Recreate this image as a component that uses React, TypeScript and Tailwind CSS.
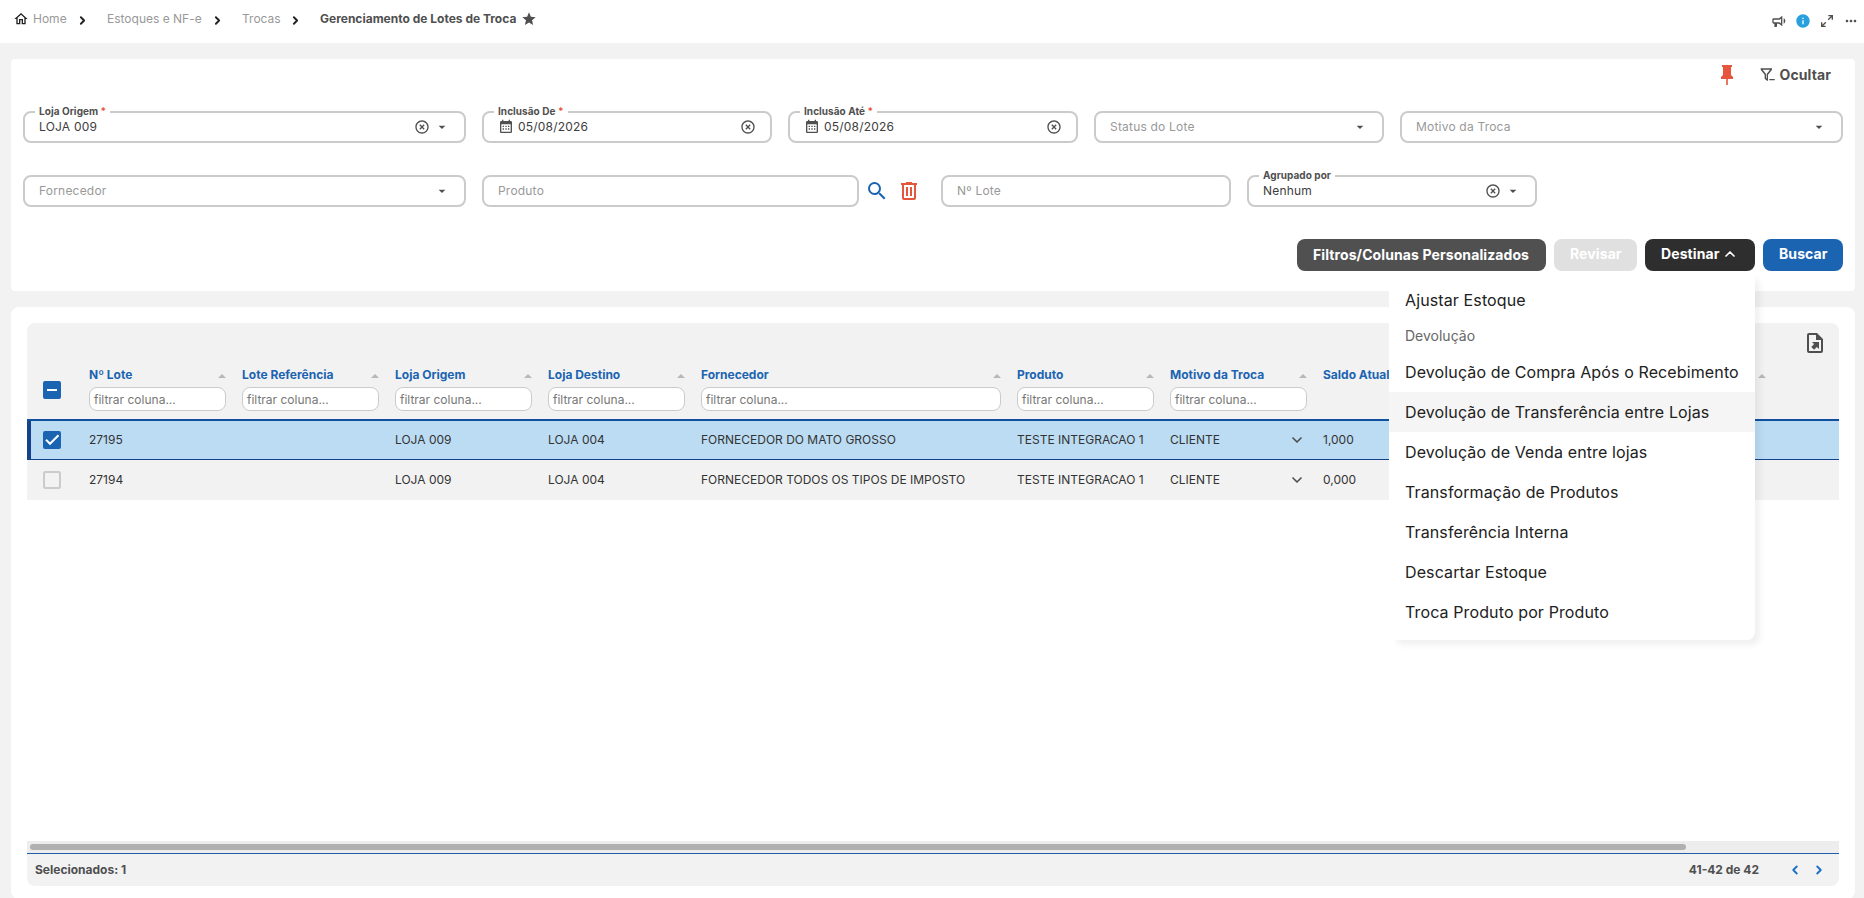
import type { ReactNode } from "react";
import clsx from "clsx";
import { MdInfo, MdMoreHoriz, MdSearch, MdStar, MdArrowDropDown } from "react-icons/md";
import { ChevronDown, ChevronLeft, ChevronRight, ChevronUp } from "lucide-react";

const icons = {
  home: "M12 5.69l5 4.5V18h-2v-6H9v6H7v-7.81l5-4.5M12 3L2 12h3v8h6v-6h2v6h6v-8h3L12 3z",
  bullhorn:
    "M12,8H4A2,2 0 0,0 2,10V14A2,2 0 0,0 4,16H5V20A1,1 0 0,0 6,21H8A1,1 0 0,0 9,20V16H12L17,20V4L12,8M15,15.6L13,14H4V10H13L15,8.4V15.6M21.5,12C21.5,13.71 20.54,15.26 19,16V8C20.53,8.75 21.5,10.3 21.5,12Z",
  expand:
    "M10,21V19H6.41L10.91,14.5L9.5,13.09L5,17.59V14H3V21H10M14.5,10.91L19,6.41V10H21V3H14V5H17.59L13.09,9.5L14.5,10.91Z",
  pin: "M16,12V4H17V2H7V4H8V12L6,14V16H11.2V22H12.8V16H18V14L16,12Z",
  filterMinus:
    "M1,2H18V4L12,11.5V20.5H10.5L7,17.5V11.5L1,4V2M4,4L9,10.5V16.5L10,17.5V10.5L15,4H4M14,18H22V20H14V18Z",
  calendar:
    "M9,10V12H7V10H9M13,10V12H11V10H13M17,10V12H15V10H17M19,3A2,2 0 0,1 21,5V19A2,2 0 0,1 19,21H5C3.89,21 3,20.1 3,19V5A2,2 0 0,1 5,3H6V1H8V3H16V1H18V3H19M19,19V8H5V19H19M9,14V16H7V14H9M13,14V16H11V14H13M17,14V16H15V14H17Z",
  clear:
    "M12,20C7.59,20 4,16.41 4,12C4,7.59 7.59,4 12,4C16.41,4 20,7.59 20,12C20,16.41 16.41,20 12,20M12,2C6.47,2 2,6.47 2,12C2,17.53 6.47,22 12,22C17.53,22 22,17.53 22,12C22,6.47 17.53,2 12,2M14.59,8L12,10.59L9.41,8L8,9.41L10.59,12L8,14.59L9.41,16L12,13.41L14.59,16L16,14.59L13.41,12L16,9.41L14.59,8Z",
  trash:
    "M9,3V4H4V6H5V19A2,2 0 0,0 7,21H17A2,2 0 0,0 19,19V6H20V4H15V3H9M7,6H17V19H7V6M9,8V17H11V8H9M13,8V17H15V8H13Z",
  fileExport:
    "M14,2H6A2,2 0 0,0 4,4V20A2,2 0 0,0 6,22H18A2,2 0 0,0 20,20V8L14,2M18,20H6V4H13V9H18V20M16,11V18.1L13.9,16L11.1,18.8L8.3,16L11.1,13.1L8.9,11H16Z",
};

function Icon({ name, className }: { name: keyof typeof icons; className?: string }) {
  return (
    <svg viewBox="0 0 24 24" fill="currentColor" className={clsx("shrink-0", className)}>
      <path d={icons[name]} />
    </svg>
  );
}

type FieldProps = {
  label: string;
  value?: string;
  required?: boolean;
  date?: boolean;
  clearable?: boolean;
  select?: boolean;
  className?: string;
};

function Field({ label, value, required, date, clearable, select, className }: FieldProps) {
  return (
    <div
      className={clsx(
        "relative flex h-8 items-center rounded-lg border-2 border-[#cbcbcb] bg-white pl-3.5 text-xs tracking-[0.2px]",
        select || date ? "pr-3.5" : "pr-4",
        className
      )}
    >
      {value && (
        <span className="absolute -top-2 left-2.5 bg-white px-1 text-[10px] leading-3 font-bold tracking-[0.05px] text-[#4f4f4f]">
          {label}
          {required && <span className="text-[#e4573d]"> *</span>}
        </span>
      )}
      {date && <Icon name="calendar" className="mr-1 size-4 text-[#4f4f4f]" />}
      <span className={clsx("grow", value ? "text-[#3d3d3d]" : "text-[#999]")}>{value ?? label}</span>
      {clearable && <Icon name="clear" className="size-4 text-[#4f4f4f]" />}
      {select && <MdArrowDropDown className="ml-1 size-4 text-[#4f4f4f]" />}
    </div>
  );
}

function Button({ className, children }: { className: string; children: ReactNode }) {
  return (
    <button className={clsx("flex h-8 items-center rounded-lg px-4 text-sm font-bold tracking-[0.1px] text-white", className)}>
      {children}
    </button>
  );
}

function DestinarMenu() {
  const actions = [
    "Devolução de Compra Após o Recebimento",
    "Devolução de Transferência entre Lojas",
    "Devolução de Venda entre lojas",
    "Transformação de Produtos",
    "Transferência Interna",
    "Descartar Estoque",
    "Troca Produto por Produto",
  ];

  return (
    <div className="absolute top-full right-0 z-20 mt-px w-[366px] rounded-lg rounded-tl-none bg-white py-2 text-base tracking-[0.12px] text-[#212121] shadow-[6px_6px_6px_-1px_rgba(0,0,0,0.06)]">
      <div className="flex h-10 items-center px-4">Ajustar Estoque</div>
      <div className="flex h-8 items-center px-4 text-sm tracking-normal text-[#666]">Devolução</div>
      {actions.map((action, index) => (
        <div key={action} className={clsx("flex h-10 items-center px-4 whitespace-nowrap", index === 1 && "bg-[#f5f5f5]")}>
          {action}
        </div>
      ))}
    </div>
  );
}

function Checkbox({ state }: { state: "on" | "off" | "mixed" }) {
  if (state === "off") {
    return <span className="block size-[18px] rounded-[2px] border-2 border-[#cbcbcb]" />;
  }
  return (
    <span className="flex size-[18px] items-center justify-center rounded-[2px] bg-[#1b64b1] text-white">
      <svg viewBox="0 0 18 18" className="size-[18px]" fill="none" stroke="currentColor" strokeWidth="2">
        <path d={state === "on" ? "M3 8.8L7 12.8L15.5 4.2" : "M4 9H14"} />
      </svg>
    </span>
  );
}

const columns = [
  { title: "Nº Lote", filter: true },
  { title: "Lote Referência", filter: true },
  { title: "Loja Origem", filter: true },
  { title: "Loja Destino", filter: true },
  { title: "Fornecedor", filter: true },
  { title: "Produto", filter: true },
  { title: "Motivo da Troca", filter: true },
  { title: "Saldo Atual", filter: false },
  { title: "", filter: false },
  { title: "", filter: false },
];

const rows = [
  {
    selected: true,
    cells: ["27195", "", "LOJA 009", "LOJA 004", "FORNECEDOR DO MATO GROSSO", "TESTE INTEGRACAO 1", "CLIENTE", "1,000"],
  },
  {
    selected: false,
    cells: ["27194", "", "LOJA 009", "LOJA 004", "FORNECEDOR TODOS OS TIPOS DE IMPOSTO", "TESTE INTEGRACAO 1", "CLIENTE", "0,000"],
  },
];

const gridCols = "grid grid-cols-[54px_153px_153px_153px_153px_316px_153px_153px_153px_153px_153px]";

function Crumb({ className, children }: { className: string; children: ReactNode }) {
  return (
    <>
      <span className={className}>{children}</span>
      <ChevronRight className="mt-0.5 mr-[18px] size-[13px] text-[#222]" strokeWidth={3.5} />
    </>
  );
}

function Header() {
  return (
    <header className="flex h-[43px] items-center bg-white pr-[5px] pb-[5px] pl-[13px] text-xs text-[#999]">
      <Icon name="home" className="mr-1 size-4 text-[#222]" />
      <Crumb className="w-[43px]">Home</Crumb>
      <Crumb className="w-[104px]">Estoques e NF-e</Crumb>
      <Crumb className="w-[47px]">Trocas</Crumb>
      <span className="font-bold text-[#4f4f4f]">Gerenciamento de Lotes de Troca</span>
      <MdStar className="ml-[5px] size-4 text-[#4f4f4f]" />
      <div className="mt-[3px] ml-auto flex items-center gap-2 text-[#4f4f4f]">
        <Icon name="bullhorn" className="size-4" />
        <MdInfo className="size-4 text-[#27a0dd]" />
        <Icon name="expand" className="size-4" />
        <MdMoreHoriz className="size-4" />
      </div>
    </header>
  );
}

function Filters() {
  return (
    <section className="h-[232px] rounded bg-white px-3 pt-1">
      <div className="flex h-6 items-center justify-end pr-3">
        <Icon name="pin" className="mr-[21px] size-6 text-[#e4573d]" />
        <Icon name="filterMinus" className="mr-1 size-4 text-[#4f4f4f]" />
        <span className="text-sm font-bold tracking-[0.1px] text-[#4f4f4f]">Ocultar</span>
      </div>

      <div className="mt-6 grid grid-cols-12 gap-x-4 gap-y-8">
        <Field className="col-span-3" label="Loja Origem" value="LOJA 009" required clearable select />
        <Field className="col-span-2" label="Inclusão De" value="05/08/2026" required date clearable />
        <Field className="col-span-2" label="Inclusão Até" value="05/08/2026" required date clearable />
        <Field className="col-span-2" label="Status do Lote" select />
        <Field className="col-span-3" label="Motivo da Troca" select />
        <Field className="col-span-3" label="Fornecedor" select />
        <div className="col-span-3 flex items-center">
          <Field className="w-[377px]" label="Produto" />
          <MdSearch className="ml-1.5 size-6 text-[#1b64b1]" />
          <Icon name="trash" className="ml-2 size-6 text-[#e4573d]" />
        </div>
        <Field className="col-span-2" label="Nº Lote" />
        <Field className="col-span-2" label="Agrupado por" value="Nenhum" clearable select />
      </div>

      <div className="mt-8 flex justify-end gap-2">
        <Button className="w-[249px] bg-[#505050]">Filtros/Colunas Personalizados</Button>
        <Button className="w-[83px] bg-[#e0e0e0] pb-0.5 text-[#f3f3f3]">Revisar</Button>
        <div className="relative">
          <Button className="w-[110px] bg-[#2e2e2e] pb-0.5">
            Destinar
            <ChevronUp className="ml-0.5 size-4" strokeWidth={2.5} />
          </Button>
          <DestinarMenu />
        </div>
        <Button className="w-20 bg-[#1b64b1] pb-0.5">Buscar</Button>
      </div>
    </section>
  );
}

function LotesTable() {
  return (
    <div className="flex h-[563px] flex-col overflow-hidden rounded-lg">
      <div className="h-24 bg-[#f2f2f2]">
        <div className="flex h-8 justify-end pt-2 pr-3">
          <Icon name="fileExport" className="size-6 text-[#4f4f4f]" />
        </div>
        <div className={clsx(gridCols, "h-16")}>
          <div className="flex items-center pt-1.5 pl-4">
            <Checkbox state="mixed" />
          </div>
          {columns.map((column, index) => (
            <div key={index} className="px-2 pt-[11px] text-xs">
              <div className="flex h-[18px] items-center justify-between font-bold whitespace-nowrap text-[#1b64b1]">
                {column.title}
                <svg viewBox="0 0 8 4" className="mt-0.5 ml-auto h-1 w-2 shrink-0" fill="#b8b8b8">
                  <path d="M0 4L4 0L8 4Z" />
                </svg>
              </div>
              {column.filter && (
                <div className="mt-[3px] flex h-6 items-center rounded-lg border border-[#cbcbcb] bg-white pt-px pl-1 text-[#777]">
                  filtrar coluna...
                </div>
              )}
            </div>
          ))}
        </div>
      </div>

      {rows.map((row) => (
        <div
          key={row.cells[0]}
          className={clsx(
            gridCols,
            "relative shrink-0 items-center text-xs text-[#333]",
            row.selected ? "h-[41px] border-t-2 border-b border-t-[#11509f] border-b-[#14438c] bg-[#bbdcf3]" : "h-10 bg-[#f2f2f2]"
          )}
        >
          {row.selected && <span className="absolute inset-y-0 left-0 w-1 bg-[#14438c]" />}
          <div className="pl-4">
            <Checkbox state={row.selected ? "on" : "off"} />
          </div>
          {row.cells.map((cell, index) => (
            <div key={index} className="flex items-center justify-between px-2 whitespace-nowrap">
              {cell}
              {index === 6 && <ChevronDown className="mr-0.5 size-4 text-[#4f4f4f]" strokeWidth={2.5} />}
            </div>
          ))}
        </div>
      ))}

      <div className="mt-auto h-3 bg-[#ededed] px-[3px] py-[3px]">
        <div className="h-1.5 w-[1656px] rounded-full bg-[#b0b0b0]" />
      </div>
      <div className="flex h-[33px] items-center border-t border-[#1f5ea8] bg-[#f2f2f2] pr-3 pl-2 text-xs font-bold text-[#4f4f4f]">
        <span>Selecionados: 1</span>
        <span className="mr-[29px] ml-auto">41-42 de 42</span>
        <ChevronLeft className="mr-2.5 size-[14px] text-[#1b6fc4]" strokeWidth={3.2} />
        <ChevronRight className="mr-px size-[14px] text-[#1b6fc4]" strokeWidth={3.2} />
      </div>
    </div>
  );
}

export default function App() {
  return (
    <div className="h-[898px] w-[1864px] overflow-hidden bg-[#f2f2f2] font-['Inter',sans-serif]">
      <Header />
      <main className="flex flex-col gap-4 pt-4 pr-[9px] pl-[11px]">
        <Filters />
        <section className="h-[592px] rounded-lg bg-white p-4">
          <LotesTable />
        </section>
      </main>
    </div>
  );
}
